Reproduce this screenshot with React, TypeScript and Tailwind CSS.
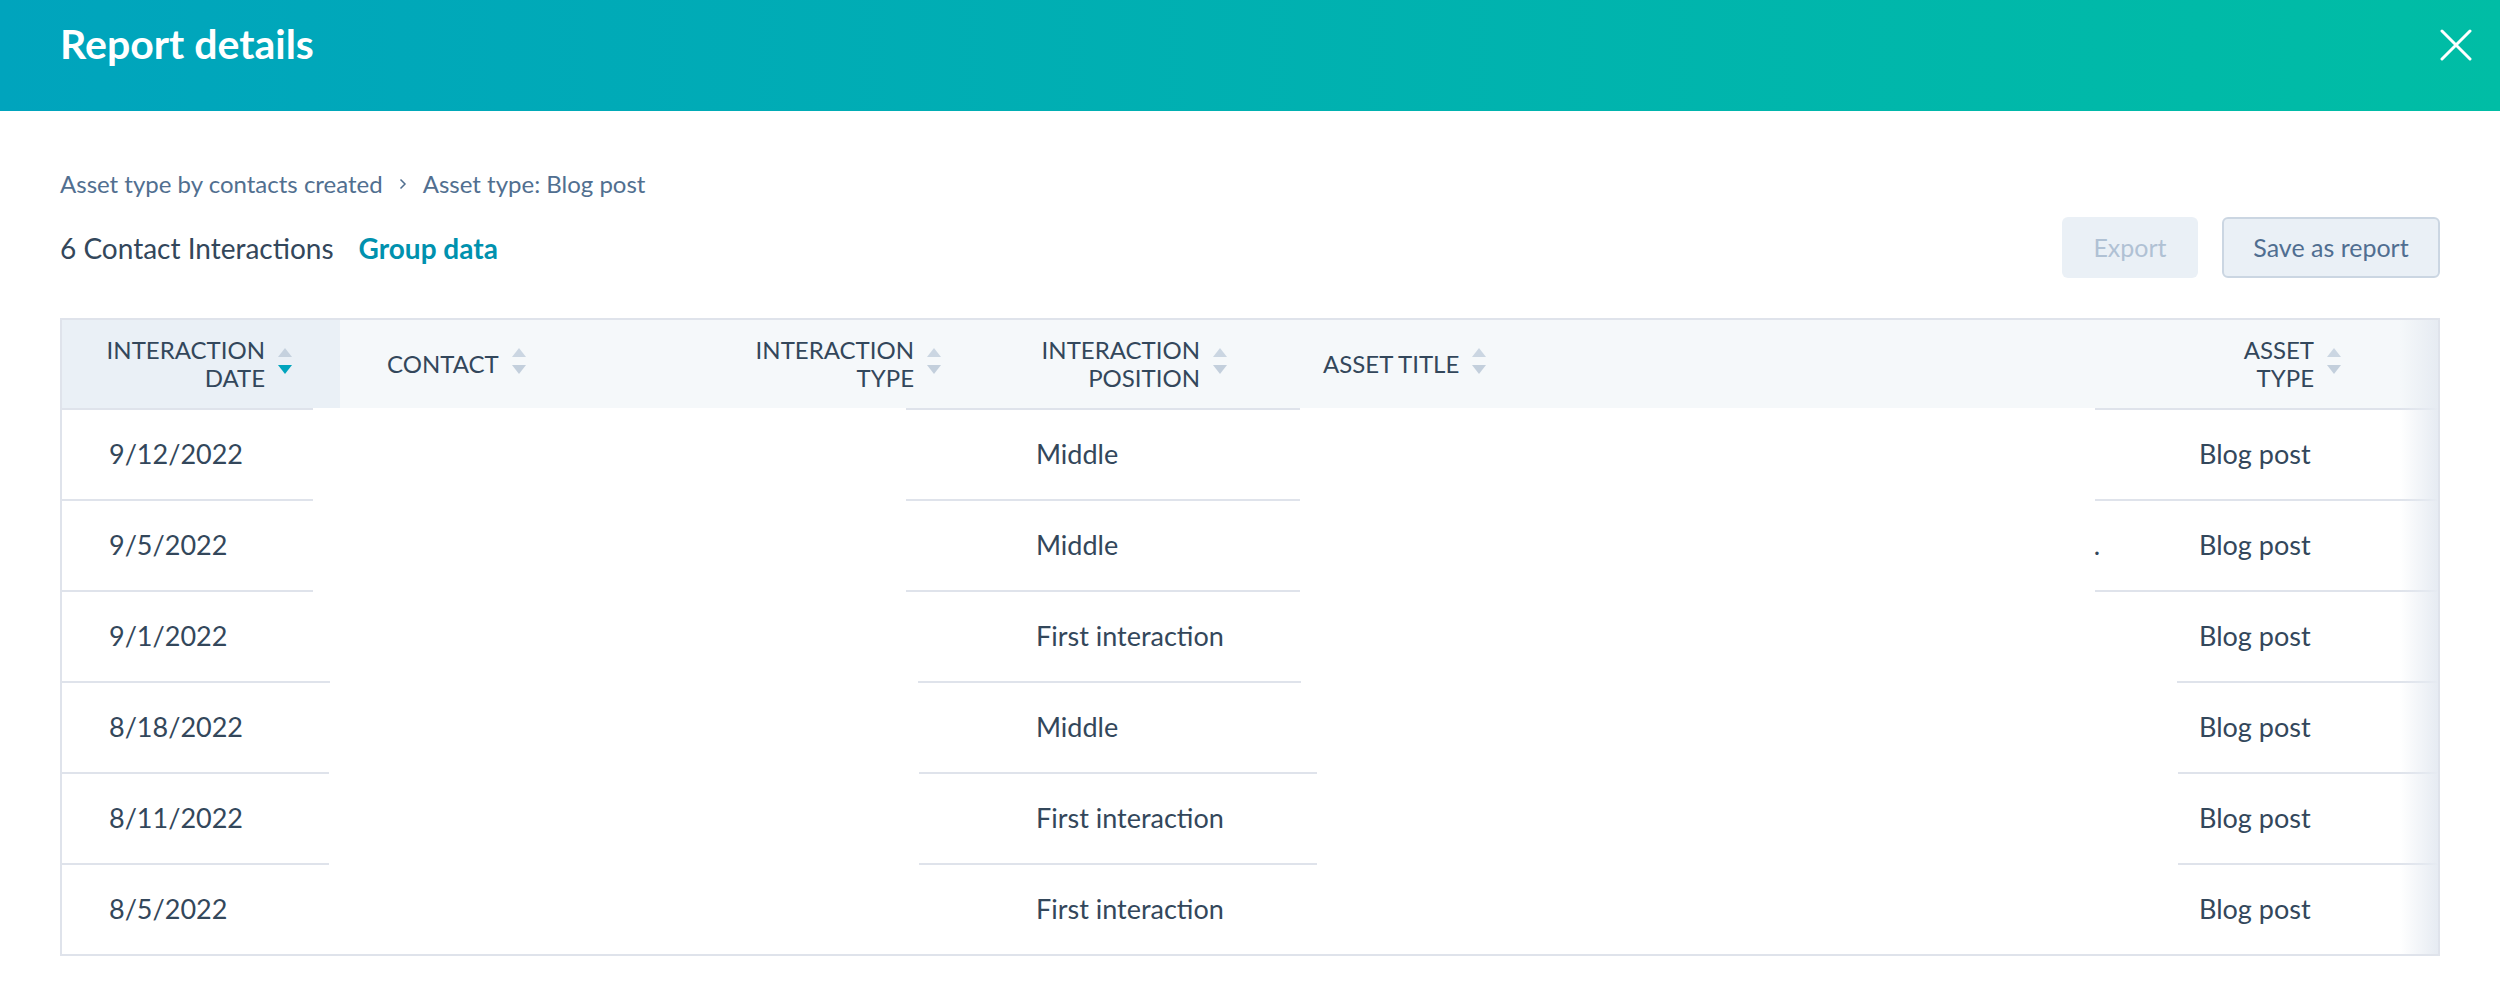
import React from 'react';

type Seg = [number, boolean];

// row divider segments (px from table inner left), true = visible line
const patternA: Seg[] = [[251, true], [593, false], [394, true], [795, false], [343, true]];
const patternB: Seg[] = [[268, true], [588, false], [383, true], [876, false], [261, true]];
const patternC: Seg[] = [[267, true], [590, false], [398, true], [861, false], [260, true]];

const rows = [
  { date: '9/12/2022', position: 'Middle', dot: false, divider: patternA },
  { date: '9/5/2022', position: 'Middle', dot: true, divider: patternA },
  { date: '9/1/2022', position: 'First interaction', dot: false, divider: patternB },
  { date: '8/18/2022', position: 'Middle', dot: false, divider: patternC },
  { date: '8/11/2022', position: 'First interaction', dot: false, divider: patternC },
  { date: '8/5/2022', position: 'First interaction', dot: false, divider: null },
];

const gridCols = 'grid grid-cols-[278px_360px_290px_285px_877px_286px]';

function SortIcon({ active = false }: { active?: boolean }) {
  return (
    <svg width="16" height="26" viewBox="0 0 16 26" className="ml-[12px] shrink-0 -mt-[6px]">
      <polygon points="1,9 8,0 15,9" fill={active ? '#c5d1de' : '#cbd6e2'} />
      <polygon points="1,17 8,26 15,17" fill={active ? '#00a4bd' : '#c3cfdc'} />
    </svg>
  );
}

function Divider({ segs }: { segs: Seg[] }) {
  return (
    <div className="flex h-[2px]">
      {segs.map(([w, on], i) => (
        <div key={i} style={{ width: w }} className={on ? 'h-full bg-[#dfe3eb]' : 'h-full bg-white'} />
      ))}
    </div>
  );
}

export default function App() {
  return (
    <div className="min-h-screen bg-white font-[Lato,'Open_Sans',sans-serif] text-[#33475b]">
      {/* header bar */}
      <div className="flex h-[111px] items-start justify-between bg-[linear-gradient(90deg,#00a4bd,#00bda5)] pl-[60px] pr-[28px]">
        <h1 className="pt-[23px] text-[41px] font-bold leading-[41px] text-white">Report details</h1>
        <button className="pt-[29px]" aria-label="Close">
          <svg width="32" height="32" viewBox="0 0 32 32">
            <path d="M2 2 L30 30 M30 2 L2 30" stroke="white" strokeWidth="3" strokeLinecap="round" />
          </svg>
        </button>
      </div>

      <div className="px-[60px]">
        {/* breadcrumb */}
        <div className="mt-[57px] flex items-center text-[24px] leading-[32px] text-[#516f90]">
          <span>Asset type by contacts created</span>
          <svg width="8" height="12" viewBox="0 0 8 12" className="mx-[16px]">
            <path d="M1.5 1.5 L6 6 L1.5 10.5" fill="none" stroke="#516f90" strokeWidth="1.5" />
          </svg>
          <span>Asset type: Blog post</span>
        </div>

        {/* count + actions */}
        <div className="mt-[17px] flex items-center justify-between">
          <div className="flex items-center text-[28px]">
            <span>6 Contact Interactions</span>
            <a className="ml-[25px] font-bold text-[#0091ae]">Group data</a>
          </div>
          <div className="flex items-center gap-[24px]">
            <button className="h-[61px] w-[136px] rounded-[6px] bg-[#eaf0f6] text-[25px] text-[#b0c1d4]">Export</button>
            <button className="h-[61px] w-[218px] rounded-[6px] border-2 border-[#cbd6e2] bg-[#eaf0f6] text-[25px] text-[#506e91]">
              Save as report
            </button>
          </div>
        </div>

        {/* table */}
        <div className="relative mt-[40px] border-2 border-[#dfe3eb] bg-white">
          <div className={`${gridCols} h-[88px] bg-[#f5f8fa] text-[24px] uppercase leading-[28px]`}>
            <div className="flex items-center justify-end bg-[#eaf0f6] pr-[47px]">
              <div className="text-right">
                Interaction
                <br />
                Date
              </div>
              <SortIcon active />
            </div>
            <div className="flex items-center pl-[47px]">
              <div>Contact</div>
              <SortIcon />
            </div>
            <div className="flex items-center justify-end pr-[48px]">
              <div className="text-right">
                Interaction
                <br />
                Type
              </div>
              <SortIcon />
            </div>
            <div className="flex items-center justify-end pr-[47px]">
              <div className="text-right">
                Interaction
                <br />
                Position
              </div>
              <SortIcon />
            </div>
            <div className="flex items-center pl-[48px]">
              <div>Asset title</div>
              <SortIcon />
            </div>
            <div className="flex items-center justify-end pr-[96px]">
              <div className="text-right">
                Asset
                <br />
                Type
              </div>
              <SortIcon />
            </div>
          </div>
          <Divider segs={patternA} />

          {rows.map((r) => (
            <div key={r.date}>
              <div className={`${gridCols} h-[89px] text-[27px]`}>
                <div className="flex items-center pl-[47px]">{r.date}</div>
                <div />
                <div />
                <div className="flex items-center pl-[46px]">{r.position}</div>
                <div className="flex items-center justify-end pr-[52px]">{r.dot ? '.' : ''}</div>
                <div className="flex items-center pl-[47px]">Blog post</div>
              </div>
              {r.divider && <Divider segs={r.divider} />}
            </div>
          ))}

          <div className="pointer-events-none absolute inset-y-0 right-0 w-[38px] bg-[linear-gradient(to_right,rgba(234,240,246,0),#e6ebf2)]" />
        </div>
      </div>
    </div>
  );
}
